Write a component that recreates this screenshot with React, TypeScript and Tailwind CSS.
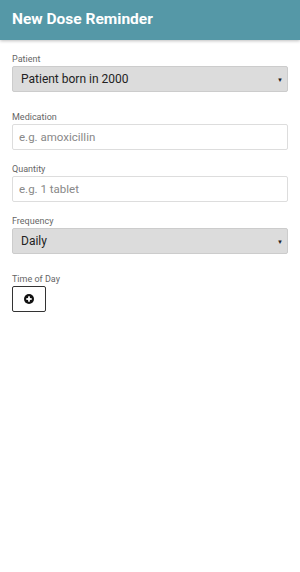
export default function App() {
  return (
    <div className="min-h-[572px] bg-white font-['Roboto',sans-serif]">
      <header className="flex h-10 items-center bg-[#5598a7] px-3 shadow-[0_1px_3px_rgba(0,0,0,0.25)]">
        <h1 className="text-[15.5px] font-bold text-white">New Dose Reminder</h1>
      </header>

      <form className="px-3 pt-[13px]">
        <Field label="Patient" gap="mb-[19px]">
          <Select value="Patient born in 2000" />
        </Field>
        <Field label="Medication" gap="mb-[13px]">
          <Input placeholder="e.g. amoxicillin" />
        </Field>
        <Field label="Quantity" gap="mb-[13px]">
          <Input placeholder="e.g. 1 tablet" />
        </Field>
        <Field label="Frequency" gap="mb-[19px]">
          <Select value="Daily" />
        </Field>
        <Field label="Time of Day" gap="mb-0">
          <button
            type="button"
            className="flex h-[26px] w-[34px] items-center justify-center rounded-[2px] border border-[#333] bg-white"
          >
            <svg width="10" height="10" viewBox="0 0 10 10">
              <circle cx="5" cy="5" r="5" fill="#111" />
              <rect x="2.3" y="4.1" width="5.4" height="1.8" fill="#fff" />
              <rect x="4.1" y="2.3" width="1.8" height="5.4" fill="#fff" />
            </svg>
          </button>
        </Field>
      </form>
    </div>
  )
}

function Field({ label, gap, children }: { label: string; gap: string; children: React.ReactNode }) {
  return (
    <div className={gap}>
      <label className="block text-[9px] leading-[12px] text-[#666]">{label}</label>
      <div className="mt-[1px]">{children}</div>
    </div>
  )
}

function Select({ value }: { value: string }) {
  return (
    <div className="flex h-[26px] items-center justify-between rounded-[2px] border border-[#ccc] bg-[#dcdcdc] pl-[8px] pr-[4px]">
      <span className="text-[12px] text-[#222]">{value}</span>
      <span className="text-[6px] text-[#222]">▼</span>
    </div>
  )
}

function Input({ placeholder }: { placeholder: string }) {
  return (
    <input
      placeholder={placeholder}
      className="block h-[26px] w-full rounded-[2px] border border-[#ddd] bg-white px-[6px] text-[11.5px] text-[#222] placeholder:text-[#888] outline-none"
    />
  )
}
